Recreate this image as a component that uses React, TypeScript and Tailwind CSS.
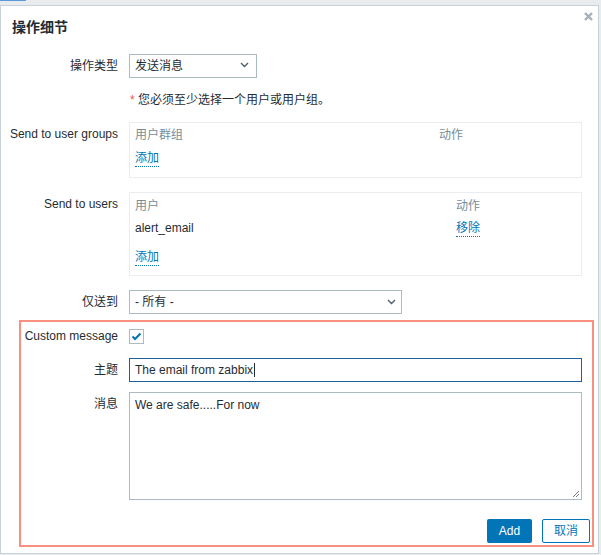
import React from "react";

const FONT = '"Liberation Sans", Arial, "Noto Sans CJK SC", sans-serif';

function Chevron() {
  return (
    <svg width="9" height="6" viewBox="0 0 9 6">
      <polyline points="1,1 4.5,4.5 8,1" fill="none" stroke="#4f5f6a" strokeWidth="1.4" />
    </svg>
  );
}

function Link({ children }: { children: React.ReactNode }) {
  return (
    <span className="inline-block text-[#0275b8] leading-[15px] border-b border-dotted border-[#0275b8]">
      {children}
    </span>
  );
}

export default function App() {
  return (
    <div
      className="w-[601px] h-[555px] bg-[#e8ecef] overflow-hidden text-[12px] text-[#1f2c33]"
      style={{ fontFamily: FONT }}
    >
      <div className="h-[5px]">
        <div className="w-[26px] h-[1px] bg-[#5a9ad6]" />
      </div>
      <div className="w-[599px] h-[549px] bg-white border border-[#c7d1d7] box-border">
        {/* header */}
        <div className="h-[38px] flex justify-between items-start">
          <div className="pl-[11px] pt-[11px] leading-[20px] text-[14px] font-bold">操作细节</div>
          <div className="mt-[6px] mr-[5px]">
            <svg width="9" height="9" viewBox="0 0 9 9">
              <line x1="1" y1="1" x2="8" y2="8" stroke="#a3b1b9" strokeWidth="2.4" />
              <line x1="8" y1="1" x2="1" y2="8" stroke="#a3b1b9" strokeWidth="2.4" />
            </svg>
          </div>
        </div>

        {/* row 1 */}
        <div className="mt-[10px] flex">
          <div className="w-[128px] pr-[11px] text-right leading-[24px]">操作类型</div>
          <div className="w-[128px] h-[24px] border border-[#acbbc2] flex items-center justify-between pl-[5px] pr-[7px]">
            <span>发送消息</span>
            <span className="mb-[2px]"><Chevron /></span>
          </div>
        </div>

        {/* row 2 */}
        <div className="mt-[14px] flex">
          <div className="w-[128px]" />
          <div className="leading-[16px] pl-[1px]">
            <span className="text-[#e45959]">*</span> 您必须至少选择一个用户或用户组。
          </div>
        </div>

        {/* row 3 */}
        <div className="mt-[14px] flex">
          <div className="w-[128px] pr-[11px] text-right leading-[16px] pt-[4px]">Send to user groups</div>
          <div className="w-[453px] h-[56px] border border-[#ebeef0] pl-[5px] pt-[4px]">
            <div className="flex leading-[16px] text-[#768d99]">
              <div className="w-[304px]">用户群组</div>
              <div>动作</div>
            </div>
            <div className="mt-[7px] leading-[16px]">
              <Link>添加</Link>
            </div>
          </div>
        </div>

        {/* row 4 */}
        <div className="mt-[14px] flex">
          <div className="w-[128px] pr-[11px] text-right leading-[16px] pt-[4px]">Send to users</div>
          <div className="w-[453px] h-[84px] border border-[#ebeef0] pl-[5px] pt-[5px]">
            <div className="flex leading-[16px] text-[#768d99]">
              <div className="w-[321px]">用户</div>
              <div>动作</div>
            </div>
            <div className="flex leading-[16px] mt-[6px]">
              <div className="w-[321px]">alert_email</div>
              <div><Link>移除</Link></div>
            </div>
            <div className="mt-[12px] leading-[16px]">
              <Link>添加</Link>
            </div>
          </div>
        </div>

        {/* row 5 */}
        <div className="mt-[14px] flex">
          <div className="w-[128px] pr-[11px] text-right leading-[24px]">仅送到</div>
          <div className="w-[273px] h-[24px] border border-[#acbbc2] flex items-center justify-between pl-[5px] pr-[5px]">
            <span>- 所有 -</span>
            <span className="mb-[1px]"><Chevron /></span>
          </div>
        </div>

        {/* highlighted section */}
        <div className="mt-[6px] ml-[18px] w-[575px] h-[227px] border-2 border-[#f9907f] box-border">
          <div className="mt-[7px] flex">
            <div className="w-[108px] pr-[11px] text-right leading-[15px]">Custom message</div>
            <div className="w-[15px] h-[15px] border border-[#acbbc2] box-border flex items-center justify-center">
              <svg width="11" height="9" viewBox="0 0 11 9">
                <polyline points="1.5,4.5 4,7 9.5,1.5" fill="none" stroke="#0275b8" strokeWidth="2" />
              </svg>
            </div>
          </div>

          <div className="mt-[14px] flex">
            <div className="w-[108px] pr-[11px] text-right leading-[24px]">主题</div>
            <div className="w-[453px] h-[24px] border border-[#1c5f9e] flex items-center pl-[5px]">
              <span>The email from zabbix</span>
              <span className="inline-block w-[1px] h-[14px] bg-[#1f2c33] ml-[1px]" />
            </div>
          </div>

          <div className="mt-[10px] flex">
            <div className="w-[108px] pr-[11px] text-right leading-[16px] pt-[4px]">消息</div>
            <div className="relative w-[453px] h-[108px] border border-[#acbbc2] pl-[5px] pt-[4px] leading-[16px]">
              We are safe.....For now
              <svg className="absolute right-[1px] bottom-[1px]" width="8" height="8" viewBox="0 0 8 8">
                <line x1="7" y1="1" x2="1" y2="7" stroke="#6b7780" strokeWidth="1" />
                <line x1="7" y1="4" x2="4" y2="7" stroke="#6b7780" strokeWidth="1" />
              </svg>
            </div>
          </div>

          <div className="mt-[19px] flex justify-end gap-[10px] pr-[2px]">
            <div className="w-[45px] h-[24px] rounded-[2px] bg-[#0275b8] text-white flex items-center justify-center">
              Add
            </div>
            <div className="w-[48px] h-[24px] rounded-[2px] border border-[#0275b8] text-[#0275b8] bg-white flex items-center justify-center">
              取消
            </div>
          </div>
        </div>
      </div>
    </div>
  );
}
